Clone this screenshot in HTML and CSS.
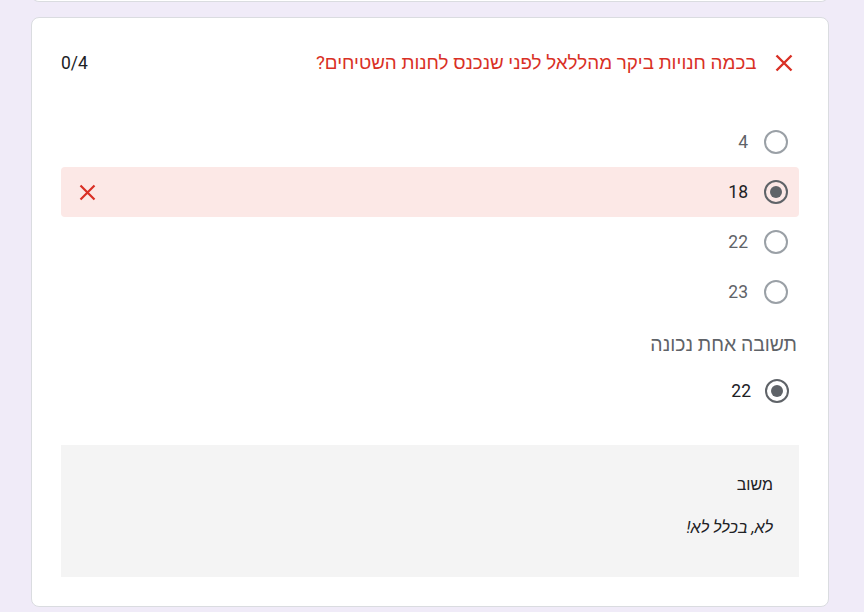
FILE: index.html
```html
<!DOCTYPE html>
<html lang="he" dir="rtl">
<head>
<meta charset="utf-8">
<title>שאלה</title>
<link rel="stylesheet" href="styles.css">
</head>
<body>
<div class="page">
  <div class="card card-prev"></div>
  <div class="card">
    <div class="q-head">
      <svg class="x-icon" width="18" height="18" viewBox="0 0 18 18"><path d="M1.5 1.5L16.5 16.5M16.5 1.5L1.5 16.5" stroke="#d93025" stroke-width="2.4" fill="none"/></svg>
      <div class="q-title">בכמה חנויות ביקר מהללאל לפני שנכנס לחנות השטיחים?</div>
      <div class="q-points">0/4</div>
    </div>
    <div class="options">
      <div class="opt"><span class="radio"></span><span class="label">4</span></div>
      <div class="opt wrong"><span class="radio checked"></span><span class="label">18</span>
        <svg class="x-small" width="17" height="17" viewBox="0 0 17 17"><path d="M1.5 1.5L15.5 15.5M15.5 1.5L1.5 15.5" stroke="#d93025" stroke-width="2.2" fill="none"/></svg>
      </div>
      <div class="opt"><span class="radio"></span><span class="label">22</span></div>
      <div class="opt"><span class="radio"></span><span class="label">23</span></div>
    </div>
    <div class="correct-title">תשובה אחת נכונה</div>
    <div class="opt correct"><span class="radio checked"></span><span class="label">22</span></div>
    <div class="feedback">
      <div class="fb-title">משוב</div>
      <div class="fb-text">לא, בכלל לא!</div>
    </div>
  </div>
</div>
</body>
</html>
```
FILE: styles.css
```css
html, body {
  margin: 0;
  padding: 0;
  background: #f0ebf8;
}
body {
  font-family: Roboto, "Liberation Sans", Arial, sans-serif;
  color: #202124;
  font-size: 16px;
}
.page {
  direction: rtl;
  display: flex;
  flex-direction: column;
  align-items: stretch;
  padding: 0 35px 0 31px;
  gap: 15px;
}
.card {
  box-sizing: border-box;
  background: #fff;
  border: 1px solid #dadce0;
  border-radius: 8px;
  padding: 33px 29px 29px 29px;
}
.card-prev {
  height: 9px;
  margin-top: -7px;
  padding: 0;
  border-top: none;
  border-radius: 0 0 8px 8px;
}
.q-head {
  display: flex;
  align-items: center;
  height: 24px;
}
.x-icon {
  margin-right: 6.5px;
  flex: none;
}
.q-title {
  font-size: 18.8px;
  color: #d93025;
  margin-right: 18px;
  line-height: 24px;
}
.q-points {
  margin-right: auto;
  font-size: 17.5px;
  line-height: 24px;
}
.options {
  margin-top: 42px;
  display: flex;
  flex-direction: column;
}
.opt {
  display: flex;
  align-items: center;
  height: 50px;
  padding-right: 11px;
  padding-left: 18px;
  border-radius: 4px;
}
.opt .label {
  margin-right: 16px;
  color: #5f6368;
  font-size: 17.5px;
  line-height: 24px;
}
.opt.wrong {
  background: #fce8e6;
}
.opt.wrong .label, .opt.correct .label {
  color: #202124;
}
.x-small {
  margin-right: auto;
  flex: none;
}
.radio {
  box-sizing: border-box;
  width: 24px;
  height: 24px;
  border: 2px solid #9aa0a6;
  border-radius: 50%;
  display: flex;
  align-items: center;
  justify-content: center;
  flex: none;
}
.radio.checked {
  border-color: #5f6368;
}
.radio.checked::after {
  content: "";
  width: 12px;
  height: 12px;
  border-radius: 50%;
  background: #5f6368;
}
.correct-title {
  font-size: 19.4px;
  margin-top: 16px;
  padding-right: 2px;
  line-height: 24px;
  color: #5f6368;
}
.opt.correct {
  margin-top: 10px;
  height: 48px;
  padding-right: 10px;
}
.opt.correct .label {
  margin-right: 14px;
}
.feedback {
  margin-top: 30px;
  background: #f4f4f4;
  padding: 28px 26px 37px 26px;
  height: 132px;
  box-sizing: border-box;
}
.fb-title {
  line-height: 24px;
}
.fb-text {
  margin-top: 19px;
  line-height: 24px;
  font-style: italic;
}
```
